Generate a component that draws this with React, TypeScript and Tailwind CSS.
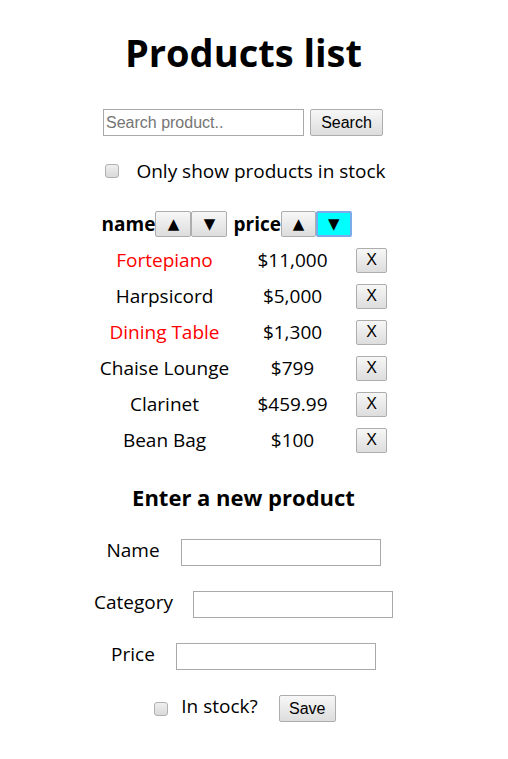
import { useState } from 'react';

interface Product {
    name: string;
    price: string;
    stocked: boolean;
}

const products: Product[] = [
    { name: 'Fortepiano', price: '$11,000', stocked: false },
    { name: 'Harpsicord', price: '$5,000', stocked: true },
    { name: 'Dining Table', price: '$1,300', stocked: false },
    { name: 'Chaise Lounge', price: '$799', stocked: true },
    { name: 'Clarinet', price: '$459.99', stocked: true },
    { name: 'Bean Bag', price: '$100', stocked: true },
];

const btn =
    'border border-[#adadad] rounded-[2px] bg-gradient-to-b from-[#f7f7f7] to-[#dddddd] text-black text-[16px] leading-none flex items-center justify-center [font-family:"Liberation_Sans",Arial,sans-serif]';

const input =
    'w-[200px] h-[27px] border border-[#a9a9a9] bg-white px-[2px] text-[16px] outline-none [font-family:"Liberation_Sans",Arial,sans-serif] placeholder:text-[#757575]';

function Checkbox() {
    return (
        <span className="inline-block shrink-0 w-[14px] h-[14px] rounded-[3px] border border-[#b0b0b0] bg-gradient-to-b from-[#efefef] to-[#d9d9d9]" />
    );
}

function SortButton({ glyph, active }: { glyph: string; active?: boolean }) {
    return (
        <button
            className={
                active
                    ? 'w-[36px] h-[26px] border-2 border-[#7aacea] rounded-[2px] bg-[#00ffff] text-black text-[15px] flex items-center justify-center [font-family:"DejaVu_Sans",sans-serif]'
                    : 'w-[36px] h-[26px] border border-[#adadad] rounded-[2px] bg-gradient-to-b from-[#f7f7f7] to-[#dddddd] text-black text-[15px] flex items-center justify-center [font-family:"DejaVu_Sans",sans-serif]'
            }
        >
            {glyph}
        </button>
    );
}

export default function App() {
    const [query, setQuery] = useState('');

    return (
        <div className="min-h-screen bg-white text-black [font-family:'Open_Sans',sans-serif]">
            <div className="w-[487px] pt-[28px] flex flex-col items-center text-[19px]">
                {/* Title */}
                <h1 className="h-[48px] leading-[48px] text-[38px] font-bold">Products list</h1>

                {/* Search */}
                <div className="mt-[33px] flex gap-[6px] -ml-[1px]">
                    <input
                        className={input + ' w-[201px]'}
                        placeholder="Search product.."
                        value={query}
                        onChange={(e) => setQuery(e.target.value)}
                    />
                    <button className={btn + ' w-[73px] h-[27px]'}>Search</button>
                </div>

                <div className="mt-[20px] h-[30px] flex items-center gap-[17px] pl-[4px]">
                    <Checkbox />
                    <span className="leading-[30px]">Only show products in stock</span>
                </div>

                {/* Table */}
                <div className="mt-[23px] grid grid-cols-[130px_118px_32px] gap-x-[4px]">
                    <div className="h-[30px] mb-[3px] flex items-center justify-center">
                        <span className="font-bold">name</span>
                        <SortButton glyph="▲" />
                        <SortButton glyph="▼" />
                    </div>
                    <div className="h-[30px] mb-[3px] flex items-center justify-center">
                        <span className="font-bold">price</span>
                        <SortButton glyph="▲" />
                        <SortButton glyph="▼" active />
                    </div>
                    <div />
                    {products.map((p) => (
                        <div key={p.name} className="contents">
                            <div className={'h-[36px] flex items-center justify-center whitespace-nowrap ' + (p.stocked ? 'text-black' : 'text-[#ff0000]')}>
                                {p.name}
                            </div>
                            <div className="h-[36px] flex items-center justify-center">{p.price}</div>
                            <div className="h-[36px] flex items-center justify-center">
                                <button className={btn + ' w-[31px] h-[25px]'}>X</button>
                            </div>
                        </div>
                    ))}
                </div>

                {/* New product form */}
                <h3 className="mt-[23px] h-[32px] leading-[32px] text-[22px] font-bold">Enter a new product</h3>

                <div className="mt-[26px] h-[27px] flex items-center gap-[21px]">
                    <span className="relative -top-[2px]">Name</span>
                    <input className={input} />
                </div>
                <div className="mt-[25px] h-[27px] flex items-center gap-[20px]">
                    <span className="relative -top-[2px]">Category</span>
                    <input className={input} />
                </div>
                <div className="mt-[25px] h-[27px] flex items-center gap-[21px]">
                    <span className="relative -top-[2px]">Price</span>
                    <input className={input} />
                </div>

                <div className="mt-[25px] h-[27px] flex items-center pl-[3px]">
                    <Checkbox />
                    <span className="ml-[13px] relative -top-[2px]">In stock?</span>
                    <button className={btn + ' ml-[21px] w-[57px] h-[27px]'}>Save</button>
                </div>
            </div>
        </div>
    );
}
